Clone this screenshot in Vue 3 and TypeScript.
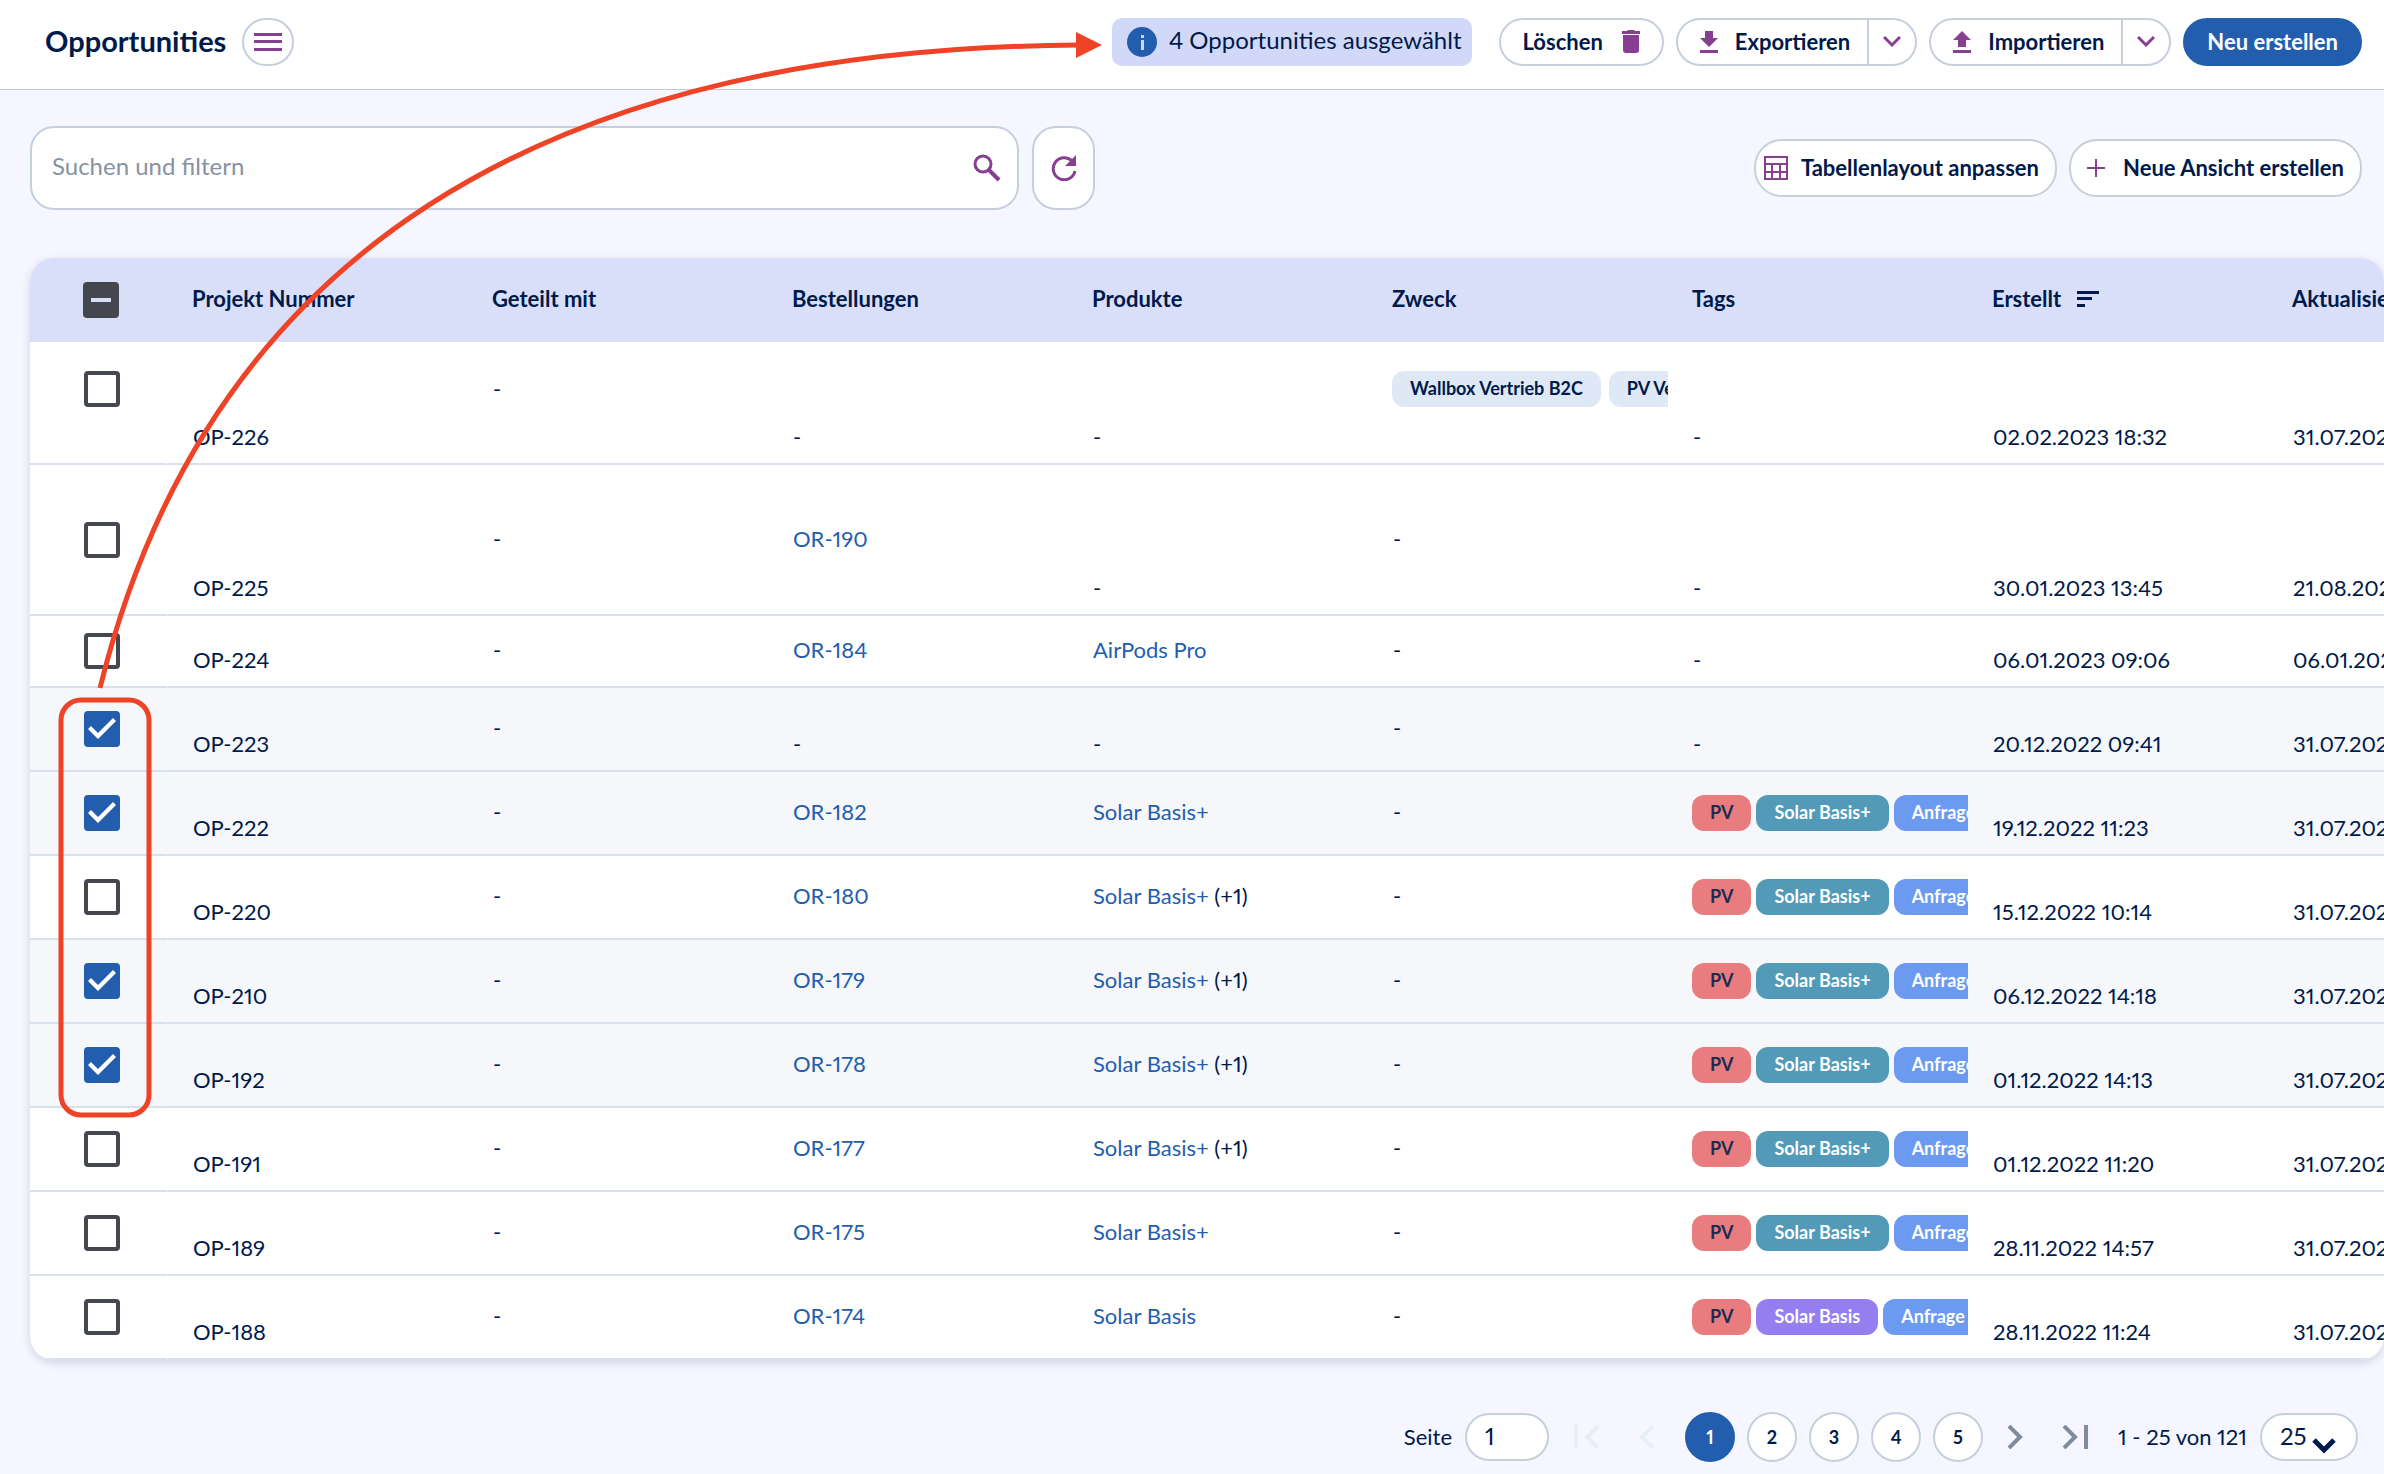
<script setup lang="ts">
import { computed, ref } from 'vue'

interface Tag {
  label: string
  tone: 'plain' | 'red' | 'teal' | 'blue' | 'violet'
}

interface Opportunity {
  id: string
  size: 'tall' | 'taller' | 'short' | 'normal'
  order: string | null
  product: string | null
  more?: string
  purposes?: Tag[]
  tags?: Tag[]
  created: string
  updated: string
}

const solarPlus: Tag[] = [
  { label: 'PV', tone: 'red' },
  { label: 'Solar Basis+', tone: 'teal' },
  { label: 'Anfrage', tone: 'blue' },
]
const solar: Tag[] = [
  { label: 'PV', tone: 'red' },
  { label: 'Solar Basis', tone: 'violet' },
  { label: 'Anfrage', tone: 'blue' },
]

const rows: Opportunity[] = [
  {
    id: 'OP-226', size: 'tall', order: null, product: null,
    purposes: [{ label: 'Wallbox Vertrieb B2C', tone: 'plain' }, { label: 'PV Vertrieb', tone: 'plain' }],
    created: '02.02.2023 18:32', updated: '31.07.2023',
  },
  { id: 'OP-225', size: 'taller', order: 'OR-190', product: null, created: '30.01.2023 13:45', updated: '21.08.2023' },
  { id: 'OP-224', size: 'short', order: 'OR-184', product: 'AirPods Pro', created: '06.01.2023 09:06', updated: '06.01.2023' },
  { id: 'OP-223', size: 'normal', order: null, product: null, created: '20.12.2022 09:41', updated: '31.07.2023' },
  { id: 'OP-222', size: 'normal', order: 'OR-182', product: 'Solar Basis+', tags: solarPlus, created: '19.12.2022 11:23', updated: '31.07.2023' },
  { id: 'OP-220', size: 'normal', order: 'OR-180', product: 'Solar Basis+', more: '(+1)', tags: solarPlus, created: '15.12.2022 10:14', updated: '31.07.2023' },
  { id: 'OP-210', size: 'normal', order: 'OR-179', product: 'Solar Basis+', more: '(+1)', tags: solarPlus, created: '06.12.2022 14:18', updated: '31.07.2023' },
  { id: 'OP-192', size: 'normal', order: 'OR-178', product: 'Solar Basis+', more: '(+1)', tags: solarPlus, created: '01.12.2022 14:13', updated: '31.07.2023' },
  { id: 'OP-191', size: 'normal', order: 'OR-177', product: 'Solar Basis+', more: '(+1)', tags: solarPlus, created: '01.12.2022 11:20', updated: '31.07.2023' },
  { id: 'OP-189', size: 'normal', order: 'OR-175', product: 'Solar Basis+', tags: solarPlus, created: '28.11.2022 14:57', updated: '31.07.2023' },
  { id: 'OP-188', size: 'normal', order: 'OR-174', product: 'Solar Basis', tags: solar, created: '28.11.2022 11:24', updated: '31.07.2023' },
]

const columns = ['Projekt Nummer', 'Geteilt mit', 'Bestellungen', 'Produkte', 'Zweck', 'Tags', 'Erstellt', 'Aktualisiert']

const selected = ref<string[]>(['OP-223', 'OP-222', 'OP-210', 'OP-192'])
const partly = computed(() => selected.value.length > 0 && selected.value.length < rows.length)
const query = ref('')
const page = ref('1')
const pageSize = ref('25')
</script>

<template>
  <div class="page">
    <header class="topbar">
      <div class="title">
        <h1>Opportunities</h1>
        <button class="menu-btn" type="button" aria-label="Menü">
          <svg width="28" height="18" viewBox="0 0 28 18"><path d="M0 0h28v3H0zM0 7h28v3H0zM0 15h28v3H0z" /></svg>
        </button>
      </div>
      <div class="actions">
        <p class="notice">
          <svg width="30" height="30" viewBox="0 0 30 30">
            <circle cx="15" cy="15" r="15" fill="#235eae" />
            <path d="M14 8h3v3h-3zM14 13h3v10h-3z" fill="#c9d8f5" />
          </svg>
          <span>{{ selected.length }} Opportunities ausgewählt</span>
        </p>
        <button class="pill delete" type="button">
          Löschen
          <svg width="18" height="24" viewBox="0 0 18 24"><path d="M6 0h6l1 1h5v3H0V1h5zM1 5h16v15a3 3 0 0 1-3 3H4a3 3 0 0 1-3-3z" /></svg>
        </button>
        <div class="split">
          <button type="button">
            <svg width="18" height="22" viewBox="0 0 18 22"><path d="M5 0h8v7h5l-9 9-9-9h5zM0 19h18v3H0z" /></svg>
            Exportieren
          </button>
          <button class="caret" type="button" aria-label="Exportoptionen">
            <svg width="18" height="12" viewBox="0 0 18 12"><path d="m1 1 8 8 8-8" class="line" /></svg>
          </button>
        </div>
        <div class="split">
          <button type="button">
            <svg width="18" height="22" viewBox="0 0 18 22"><path d="M5 16h8V9h5L9 0 0 9h5zM0 19h18v3H0z" /></svg>
            Importieren
          </button>
          <button class="caret" type="button" aria-label="Importoptionen">
            <svg width="18" height="12" viewBox="0 0 18 12"><path d="m1 1 8 8 8-8" class="line" /></svg>
          </button>
        </div>
        <button class="pill primary" type="button">Neu erstellen</button>
      </div>
    </header>

    <main>
      <div class="toolbar">
        <form class="search" role="search" @submit.prevent>
          <input v-model="query" type="text" placeholder="Suchen und filtern" aria-label="Suchen und filtern">
          <button type="submit" aria-label="Suchen">
            <svg width="28" height="28" viewBox="0 0 28 28"><circle cx="10" cy="10" r="8" class="line" /><path d="m16 16 10 10" class="line thick" /></svg>
          </button>
        </form>
        <button class="refresh" type="button" aria-label="Aktualisieren">
          <svg width="26" height="26" viewBox="0 0 26 26">
            <path d="M21 6a11 11 0 1 0 3 10" class="line" /><path d="M25 0v11H14z" />
          </svg>
        </button>
        <div class="views">
          <button class="pill layout" type="button">
            <svg width="24" height="24" viewBox="0 0 24 24"><path d="M1 1h22v22H1zM1 8h22M1 16h22M8 8v15M16 8v15" class="line thin" /></svg>
            Tabellenlayout anpassen
          </button>
          <button class="pill new-view" type="button">
            <svg width="18" height="18" viewBox="0 0 18 18"><path d="M9 0v18M0 9h18" class="line thin" /></svg>
            Neue Ansicht erstellen
          </button>
        </div>
      </div>

      <div class="card">
        <table>
          <colgroup>
            <col class="col-check">
            <col v-for="c in columns" :key="c">
          </colgroup>
          <thead>
            <tr>
              <th class="check"><input type="checkbox" :indeterminate.prop="partly" aria-label="Alle auswählen"></th>
              <th v-for="c in columns" :key="c" scope="col">
                {{ c }}
                <svg v-if="c === 'Erstellt'" class="sort" width="22" height="16" viewBox="0 0 22 16"><path d="M0 0h22v3H0zM0 6h15v3H0zM0 13h8v3H0z" /></svg>
              </th>
            </tr>
          </thead>
          <tbody>
            <tr v-for="r in rows" :key="r.id" :class="[r.size, { selected: selected.includes(r.id) }]">
              <td class="check"><input v-model="selected" type="checkbox" :value="r.id" :aria-label="r.id + ' auswählen'"></td>
              <td class="low">{{ r.id }}</td>
              <td>-</td>
              <td :class="{ low: !r.order }"><a v-if="r.order" href="#">{{ r.order }}</a><template v-else>-</template></td>
              <td :class="{ low: !r.product }">
                <template v-if="r.product"><a href="#">{{ r.product }}</a>{{ r.more ? ' ' + r.more : '' }}</template>
                <template v-else>-</template>
              </td>
              <td>
                <div v-if="r.purposes" class="tags purposes">
                  <span v-for="t in r.purposes" :key="t.label" class="tag" :class="t.tone">{{ t.label }}</span>
                </div>
                <template v-else>-</template>
              </td>
              <td :class="{ low: !r.tags }">
                <div v-if="r.tags" class="tags">
                  <span v-for="t in r.tags" :key="t.label" class="tag" :class="t.tone">{{ t.label }}</span>
                </div>
                <template v-else>-</template>
              </td>
              <td class="low">{{ r.created }}</td>
              <td class="low">{{ r.updated }}</td>
            </tr>
          </tbody>
        </table>
      </div>
    </main>

    <footer class="pager">
      <label class="page-field">Seite <input v-model="page" type="text"></label>
      <nav aria-label="Seiten">
        <button class="step first" type="button" disabled aria-label="Erste Seite">
          <svg width="26" height="24" viewBox="0 0 26 24"><path d="M2 0v24M24 1 13 12l11 11" /></svg>
        </button>
        <button class="step" type="button" disabled aria-label="Vorherige Seite">
          <svg width="26" height="24" viewBox="0 0 26 24"><path d="M19 1 8 12l11 11" /></svg>
        </button>
        <div class="numbers">
          <button v-for="n in 5" :key="n" class="number" :class="{ current: String(n) === page }" type="button" @click="page = String(n)">{{ n }}</button>
        </div>
        <button class="step" type="button" aria-label="Nächste Seite">
          <svg width="26" height="24" viewBox="0 0 26 24"><path d="m7 1 11 11L7 23" /></svg>
        </button>
        <button class="step" type="button" aria-label="Letzte Seite">
          <svg width="26" height="24" viewBox="0 0 26 24"><path d="m2 1 11 11L2 23M24 0v24" /></svg>
        </button>
      </nav>
      <span class="range">1 - 25 von 121</span>
      <div class="size">
        <select v-model="pageSize" aria-label="Einträge pro Seite">
          <option>25</option>
          <option>50</option>
          <option>100</option>
        </select>
        <svg width="24" height="16" viewBox="0 0 24 16"><path d="m2 2 10 10L22 2" /></svg>
      </div>
    </footer>

    <!-- Red callout linking the ticked rows to the selection notice -->
    <svg class="callout" width="1110" height="1130" viewBox="0 0 1110 1130" aria-hidden="true">
      <path d="M100 688Q258 50 1080 45" />
      <rect x="61" y="700" width="88" height="415" rx="20" />
      <path class="head" d="M1076 32l26 13-26 13z" />
    </svg>
  </div>
</template>

<style>
body {
  margin: 0;
  background: #f5f6ff;
}
</style>

<style scoped>
.page {
  position: relative;
  box-sizing: border-box;
  min-height: 100vh;
  overflow-x: hidden;
  color: #001a4b;
  background: #f5f6ff;
  font: 22px/28px Lato, 'Open Sans', sans-serif;
  font-variant-numeric: proportional-nums;
}

button,
input,
select {
  box-sizing: border-box;
  margin: 0;
  color: inherit;
  font: inherit;
}

button {
  display: inline-flex;
  align-items: center;
  justify-content: center;
  padding: 0;
  border: 0;
  background: none;
  font-weight: 700;
  white-space: nowrap;
  cursor: pointer;
}

svg {
  display: block;
  flex: none;
  fill: #873f92;
}

.line {
  fill: none;
  stroke: #873f92;
  stroke-width: 3;
}

.line.thick {
  stroke-width: 4;
}

.line.thin {
  stroke-width: 2;
}

.topbar {
  display: flex;
  align-items: center;
  justify-content: space-between;
  box-sizing: border-box;
  height: 90px;
  padding: 0 22px 6px 45px;
  border-bottom: 1px solid #c3c8d4;
  background: #fff;
}

.title,
.actions,
.views {
  display: flex;
  align-items: center;
}

.title {
  gap: 16px;
}

h1 {
  margin: 0;
  padding-bottom: 2px;
  font-size: 29px;
  line-height: 36px;
}

.actions,
.views {
  gap: 12px;
}

.menu-btn {
  width: 52px;
  height: 48px;
  border: 2px solid #c6cfdc;
  border-radius: 24px;
}

.notice {
  display: flex;
  align-items: center;
  gap: 12px;
  box-sizing: border-box;
  height: 48px;
  margin: 0 15px 0 0;
  padding: 0 10px 0 15px;
  border-radius: 10px;
  background: #d2d8f8;
  font-size: 24px;
}

.notice span {
  padding-bottom: 3px;
}

.pill,
.split {
  box-sizing: border-box;
  height: 48px;
  border: 2px solid #c6cfdc;
  border-radius: 28px;
  background: #fff;
}

.pill {
  padding: 0 22px;
}

.delete {
  gap: 19px;
}

.split {
  display: flex;
  overflow: hidden;
}

.split button {
  gap: 17px;
  padding: 0 17px 0 22px;
}

.split .caret {
  width: 48px;
  padding: 0;
  border-left: 2px solid #c6cfdc;
}

.primary {
  border-color: #235eae;
  background: #235eae;
  color: #fff;
}

.toolbar {
  display: flex;
  align-items: center;
  gap: 13px;
  padding: 36px 22px 48px 30px;
}

.search {
  display: flex;
  flex: 0 1 989px;
  box-sizing: border-box;
  height: 84px;
  border: 2px solid #c6cfdc;
  border-radius: 24px;
  background: #fff;
}

.search input {
  flex: 1;
  min-width: 0;
  padding: 0 20px 4px;
  border: 0;
  outline: 0;
  background: none;
  font-size: 24px;
}

.search input::placeholder {
  color: #8792a2;
  opacity: 1;
}

.search button {
  width: 60px;
}

.refresh {
  width: 63px;
  height: 84px;
  border: 2px solid #c6cfdc;
  border-radius: 24px;
  background: #fff;
}

.views {
  margin-left: auto;
}

.views .pill {
  height: 58px;
}

.layout {
  gap: 13px;
  padding: 0 16px 0 8px;
}

.new-view {
  gap: 18px;
  padding: 0 16px;
}

.card {
  margin-left: 30px;
  overflow: hidden;
  border-radius: 24px;
  background: #fff;
  box-shadow: 0 3px 10px rgba(20, 30, 80, 0.16);
}

table {
  width: 2538px;
  table-layout: fixed;
  border-spacing: 0;
}

.col-check {
  width: 138px;
}

th,
td {
  box-sizing: border-box;
  height: 84px;
  padding: 0 0 2px 24px;
  overflow: hidden;
  text-align: left;
  white-space: nowrap;
}

th {
  background: #dadff9;
  font-weight: 700;
}

td {
  padding-left: 25px;
  border-bottom: 2px solid #d6e1ec;
}

.check {
  padding: 0 0 0 54px;
}

th.check {
  padding-left: 53px;
}

td.check {
  border-right: 1px solid transparent;
}

td:has(.tags) {
  padding: 0 0 0 24px;
}

.tall td {
  height: 123px;
  padding-bottom: 27px;
}

.taller td {
  height: 151px;
}

.short td {
  height: 72px;
}

td.low {
  padding-bottom: 12px;
  vertical-align: bottom;
}

.selected td {
  background: #f5f7fb;
}

.sort {
  display: inline-block;
  margin-left: 10px;
  fill: #001a4b;
}

a {
  color: #235eae;
  text-decoration: none;
}

input[type='checkbox'] {
  display: block;
  width: 36px;
  height: 36px;
  border: 4px solid #44474f;
  border-radius: 4px;
  appearance: none;
}

input[type='checkbox']:checked {
  border: 0;
  background: #235eae;
}

input[type='checkbox']:checked::before {
  display: block;
  width: 36px;
  height: 36px;
  background: #fff;
  clip-path: polygon(4px 18px, 7px 15px, 14px 22px, 29px 7px, 32px 10px, 14px 28px);
  content: '';
}

input[type='checkbox']:indeterminate {
  padding: 12px 4px;
  background: #44474f;
}

input[type='checkbox']:indeterminate::before {
  display: block;
  height: 4px;
  background: #dadff9;
  content: '';
}

.tags {
  display: flex;
  gap: 5px;
}

.purposes {
  gap: 8px;
}

.tag {
  flex: none;
  padding: 0 18px 2px;
  border-radius: 12px;
  color: #fff;
  font-size: 18px;
  font-weight: 700;
  line-height: 34px;
}

.plain {
  background: #dfe9f6;
  color: #001a4b;
}

.red {
  background: #e97c7f;
  color: #1d2b4f;
}

.teal {
  background: #529ab7;
}

.blue {
  background: #6c9af0;
}

.violet {
  background: #957ff0;
}

.pager {
  display: flex;
  align-items: center;
  justify-content: flex-end;
  padding: 52px 26px 12px 30px;
}

.page-field {
  display: flex;
  align-items: center;
  gap: 13px;
}

.page-field input {
  width: 84px;
  height: 48px;
  padding: 0 18px 3px;
  border: 2px solid #c6cfdc;
  border-radius: 24px;
  background: #fff;
  font-size: 24px;
}

nav {
  display: flex;
  align-items: center;
  margin: 0 17px 0 12px;
}

.step {
  width: 52px;
  height: 50px;
}

.step + .step {
  margin-left: 8px;
}

.step path,
.size path {
  fill: none;
  stroke: #808c9d;
  stroke-width: 4;
}

.step:disabled path {
  stroke: #e7eef7;
}

.numbers {
  display: flex;
  gap: 12px;
  margin: 0 6px 0 12px;
}

.number {
  width: 50px;
  height: 50px;
  border: 2px solid #c6cfdc;
  border-radius: 25px;
  background: #fff;
  font-size: 18px;
}

.number.current {
  border-color: #235eae;
  background: #235eae;
  color: #fff;
}

.size {
  display: grid;
  align-items: center;
  margin-left: 13px;
}

.size > * {
  grid-area: 1 / 1;
}

.size select {
  width: 98px;
  height: 48px;
  padding: 0 18px 2px;
  border: 2px solid #c6cfdc;
  border-radius: 24px;
  background: #fff;
  font-size: 24px;
  appearance: none;
}

.size svg {
  justify-self: end;
  margin: 18px 22px 0 0;
  pointer-events: none;
}

.size path {
  stroke: #001a4b;
  stroke-width: 5;
}

.callout {
  position: absolute;
  top: 0;
  left: 0;
  pointer-events: none;
}

.callout path,
.callout rect {
  fill: none;
  stroke: #ee4327;
  stroke-width: 5;
}

.callout .head {
  fill: #ee4327;
  stroke: none;
}
</style>
